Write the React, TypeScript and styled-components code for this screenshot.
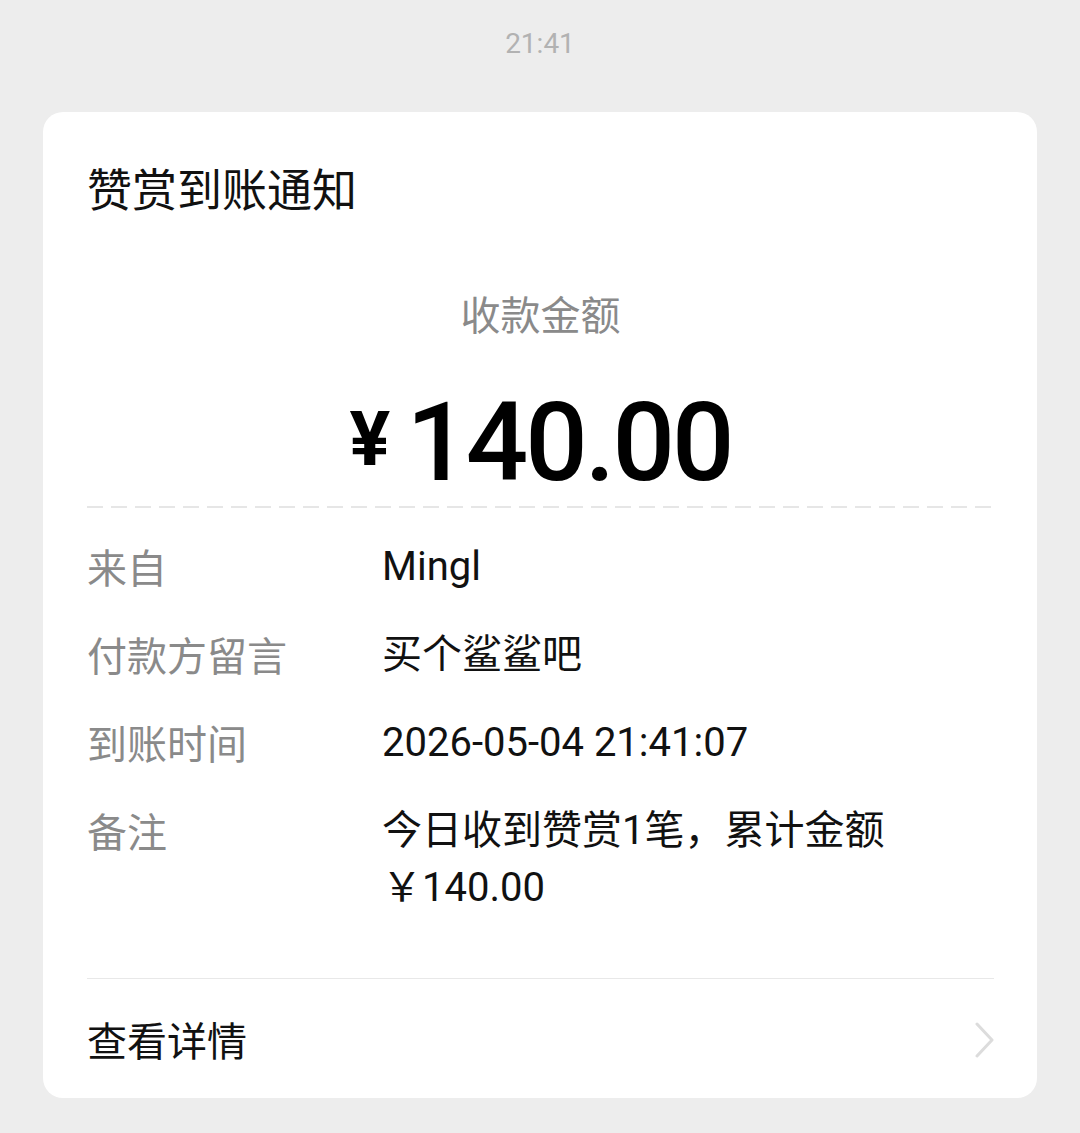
import React from "react";
import styled, { createGlobalStyle } from "styled-components";

const Global = createGlobalStyle`
  html, body { margin: 0; padding: 0; background: #ededed; }
  body { font-family: Roboto, "Noto Sans CJK SC", sans-serif; -webkit-font-smoothing: antialiased; }
`;

const Page = styled.div`
  width: 1080px;
  min-height: 1133px;
  background: #ededed;
  display: flex;
  flex-direction: column;
  align-items: center;
  padding-top: 30px;
  box-sizing: border-box;
`;

const TimeStamp = styled.div`
  font-family: Roboto, "Noto Sans CJK SC", sans-serif;
  font-size: 28px;
  line-height: 28px;
  color: #b2b2b2;
  margin-bottom: 54px;
`;

const Card = styled.div`
  width: 994px;
  background: #ffffff;
  border-radius: 20px;
  padding: 46px 43px 30px 44px;
  box-sizing: border-box;
  display: flex;
  flex-direction: column;
`;

const Title = styled.div`
  font-family: "Noto Sans CJK SC", sans-serif;
  font-size: 45px;
  line-height: 60px;
  color: #111111;
`;

const AmountLabel = styled.div`
  margin-top: 67px;
  text-align: center;
  font-family: "Noto Sans CJK SC", sans-serif;
  font-size: 40px;
  line-height: 56px;
  color: #8a8a8a;
`;

const Amount = styled.div`
  margin-top: 42px;
  height: 120px;
  display: flex;
  justify-content: center;
  align-items: flex-start;
  color: #000;
`;

const Yen = styled.span`
  font-family: Roboto, sans-serif;
  font-weight: 700;
  font-size: 76px;
  line-height: 76px;
  margin-top: 18px;
  margin-right: 16px;
`;

const Digits = styled.span`
  font-family: Roboto, sans-serif;
  font-weight: 500;
  font-size: 110px;
  line-height: 120px;
  letter-spacing: -3px;
`;

const DashedDivider = styled.div`
  margin-top: 3px;
  height: 2px;
  background-image: linear-gradient(to right, #e6e6e6 0 16px, transparent 16px 24px);
  background-size: 24px 2px;
  background-repeat: repeat-x;
`;

const Rows = styled.div`
  margin-top: 30px;
  display: flex;
  flex-direction: column;
  gap: 31px;
`;

const Row = styled.div`
  display: grid;
  grid-template-columns: 295px 1fr;
  font-size: 40px;
  line-height: 57px;
`;

const Label = styled.div`
  font-family: "Noto Sans CJK SC", sans-serif;
  color: #8a8a8a;
`;

const Value = styled.div`
  font-family: Roboto, "Noto Sans CJK SC", sans-serif;
  color: #111111;
  padding-right: 100px;
`;

const SolidDivider = styled.div`
  margin-top: 62px;
  height: 1px;
  background: #e8e8e8;
`;

const Footer = styled.div`
  margin-top: 32px;
  display: flex;
  align-items: center;
  justify-content: space-between;
`;

const FooterText = styled.div`
  font-family: "Noto Sans CJK SC", sans-serif;
  font-size: 40px;
  line-height: 57px;
  color: #111111;
`;

const ChevronIcon = styled.svg`
  margin-right: -2px;
`;

const Chevron = () => (
  <ChevronIcon width="22" height="36" viewBox="0 0 22 36">
    <path d="M3 2 L18 18 L3 34" fill="none" stroke="#dcdcdc" strokeWidth="3" strokeLinecap="round" strokeLinejoin="round" />
  </ChevronIcon>
);

const rows: { label: string; value: string }[] = [
  { label: "来自", value: "Mingl" },
  { label: "付款方留言", value: "买个鲨鲨吧" },
  { label: "到账时间", value: "2026-05-04 21:41:07" },
  { label: "备注", value: "今日收到赞赏1笔，累计金额 ￥140.00" },
];

export default function App() {
  return (
    <>
      <Global />
      <Page>
        <TimeStamp>21:41</TimeStamp>
        <Card>
          <Title>赞赏到账通知</Title>
          <AmountLabel>收款金额</AmountLabel>
          <Amount>
            <Yen>¥</Yen>
            <Digits>140.00</Digits>
          </Amount>
          <DashedDivider />
          <Rows>
            {rows.map((r) => (
              <Row key={r.label}>
                <Label>{r.label}</Label>
                <Value>{r.value}</Value>
              </Row>
            ))}
          </Rows>
          <SolidDivider />
          <Footer>
            <FooterText>查看详情</FooterText>
            <Chevron />
          </Footer>
        </Card>
      </Page>
    </>
  );
}
